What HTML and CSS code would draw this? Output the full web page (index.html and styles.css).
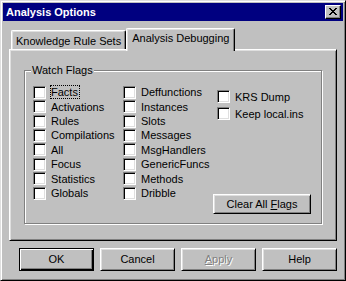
FILE: index.html
```html
<!DOCTYPE html>
<html lang="en">
<head>
  <meta charset="UTF-8" />
  <title>Analysis Options</title>
  <link rel="stylesheet" href="styles.css">
</head>
<body>
  <div class="window">
    <div class="titlebar">
      <span class="title">Analysis Options</span>
      <span class="close">
        <svg width="8" height="7" viewBox="0 0 8 7" shape-rendering="crispEdges">
          <path fill="#000" d="M0 0h2v1h-2z M6 0h2v1h-2z M1 1h2v1h-2z M5 1h2v1h-2z M2 2h4v1h-4z M3 3h2v1h-2z M2 4h4v1h-4z M1 5h2v1h-2z M5 5h2v1h-2z M0 6h2v1h-2z M6 6h2v1h-2z"/>
        </svg>
      </span>
    </div>

    <div class="dialog">
      <!-- Tabs -->
      <div class="tabs">
        <div class="tab">Knowledge Rule Sets</div>
        <div class="tab active">Analysis Debugging</div>
      </div>

      <div class="panel">
        <fieldset class="group">
          <legend>Watch Flags</legend>
          <div class="cols">
            <div class="col">
              <div class="check"><span class="box"></span><span class="label focus">Facts</span></div>
              <div class="check"><span class="box"></span><span class="label">Activations</span></div>
              <div class="check"><span class="box"></span><span class="label">Rules</span></div>
              <div class="check"><span class="box"></span><span class="label">Compilations</span></div>
              <div class="check"><span class="box"></span><span class="label">All</span></div>
              <div class="check"><span class="box"></span><span class="label">Focus</span></div>
              <div class="check"><span class="box"></span><span class="label">Statistics</span></div>
              <div class="check"><span class="box"></span><span class="label">Globals</span></div>
            </div>
            <div class="col">
              <div class="check"><span class="box"></span><span class="label">Deffunctions</span></div>
              <div class="check"><span class="box"></span><span class="label">Instances</span></div>
              <div class="check"><span class="box"></span><span class="label">Slots</span></div>
              <div class="check"><span class="box"></span><span class="label">Messages</span></div>
              <div class="check"><span class="box"></span><span class="label">MsgHandlers</span></div>
              <div class="check"><span class="box"></span><span class="label">GenericFuncs</span></div>
              <div class="check"><span class="box"></span><span class="label">Methods</span></div>
              <div class="check"><span class="box"></span><span class="label">Dribble</span></div>
            </div>
            <div class="col col-extra">
              <div class="check"><span class="box"></span><span class="label">KRS Dump</span></div>
              <div class="check"><span class="box"></span><span class="label">Keep local.ins</span></div>
              <button class="btn btn-clear">Clear All <u>F</u>lags</button>
            </div>
          </div>
        </fieldset>
      </div>

      <!-- Dialog buttons -->
      <div class="actions">
        <button class="btn btn-default">OK</button>
        <button class="btn">Cancel</button>
        <button class="btn disabled"><u>A</u>pply</button>
        <button class="btn">Help</button>
      </div>
    </div>
  </div>
</body>
</html>
```

FILE: styles.css
```css
* {
  box-sizing: border-box;
}

body {
  margin: 0;
  font-family: "Liberation Sans", Arial, sans-serif;
  font-size: 11px;
  color: #000;
  background: #c0c0c0;
}

.window {
  width: 346px;
  height: 281px;
  background: #c0c0c0;
  border: 1px solid;
  border-color: #dfdfdf #000 #000 #dfdfdf;
  box-shadow: inset 1px 1px #fff, inset -1px -1px #808080;
  padding: 2px;
  display: flex;
  flex-direction: column;
}

.titlebar {
  height: 18px;
  background: #000080;
  color: #fff;
  display: flex;
  align-items: center;
  justify-content: space-between;
  padding: 0 2px 0 3px;
}

.title {
  font-weight: bold;
  font-size: 11px;
}

.close {
  width: 16px;
  height: 14px;
  background: #c0c0c0;
  border: 1px solid;
  border-color: #fff #000 #000 #fff;
  box-shadow: inset -1px -1px #808080;
  display: flex;
  padding: 2px 0 0 3px;
}

.dialog {
  flex: 1;
  padding: 7px 6px 0;
  display: flex;
  flex-direction: column;
}

.tabs {
  height: 21px;
  display: flex;
  align-items: flex-end;
  padding-left: 2px;
  position: relative;
  z-index: 1;
}

.tab {
  height: 19px;
  padding: 4px 4px 0;
  line-height: 13px;
  background: #c0c0c0;
  border: 1px solid;
  border-color: #fff #000 transparent #fff;
  border-bottom: none;
  border-radius: 2px 2px 0 0;
  box-shadow: inset -1px 0 #808080, inset 1px 1px #dfdfdf;
  white-space: nowrap;
}

.tab.active {
  height: 23px;
  margin-bottom: -2px;
  padding: 3px 5px 0;
}

.panel {
  height: 192px;
  background: #c0c0c0;
  border: 1px solid;
  border-color: #fff #000 #000 #fff;
  box-shadow: inset 1px 1px #dfdfdf, inset -1px -1px #808080;
  padding: 14px 14px 0;
}

.group {
  margin: 0;
  min-width: 0;
  height: 160px;
  border: 1px solid #808080;
  box-shadow: inset 1px 1px #fff, 1px 1px #fff;
  padding: 8px 0 0 8px;
}

.group legend {
  margin-left: -2px;
  padding: 0 1px;
  line-height: 13px;
  background: #c0c0c0;
}

.cols {
  display: grid;
  grid-template-columns: 90px 94px 1fr;
}

.col {
  display: grid;
  grid-auto-rows: 14.43px;
}

.col-extra {
  display: flex;
  flex-direction: column;
  padding-top: 3px;
}

.col-extra .check {
  height: 17px;
}

.check {
  display: flex;
  align-items: center;
  gap: 4px;
  white-space: nowrap;
}

.box {
  width: 13px;
  height: 13px;
  flex: none;
  background: #fff;
  border: 1px solid;
  border-color: #808080 #fff #fff #808080;
  box-shadow: inset 1px 1px #000, inset -1px -1px #dfdfdf;
}

.label {
  border: 1px dotted transparent;
  padding: 0 1px 0 0;
  line-height: 12px;
}

.label.focus {
  border-color: #000;
}

.btn {
  font-family: inherit;
  font-size: 11px;
  color: #000;
  background: #c0c0c0;
  border: 1px solid;
  border-color: #fff #000 #000 #fff;
  box-shadow: inset 1px 1px #dfdfdf, inset -1px -1px #808080;
  padding: 0;
  width: 75px;
  height: 23px;
  line-height: 13px;
}

.btn-clear {
  width: 98px;
  height: 20px;
  margin-top: 72px;
  margin-left: -4px;
}

.actions {
  margin-top: 7px;
  display: flex;
  justify-content: flex-end;
  gap: 6px;
}

.btn-default {
  border-color: #000;
  box-shadow: inset 1px 1px #fff, inset -1px -1px #000, inset -2px -2px #808080;
}

.btn.disabled {
  color: #808080;
  text-shadow: 1px 1px #fff;
}
```
